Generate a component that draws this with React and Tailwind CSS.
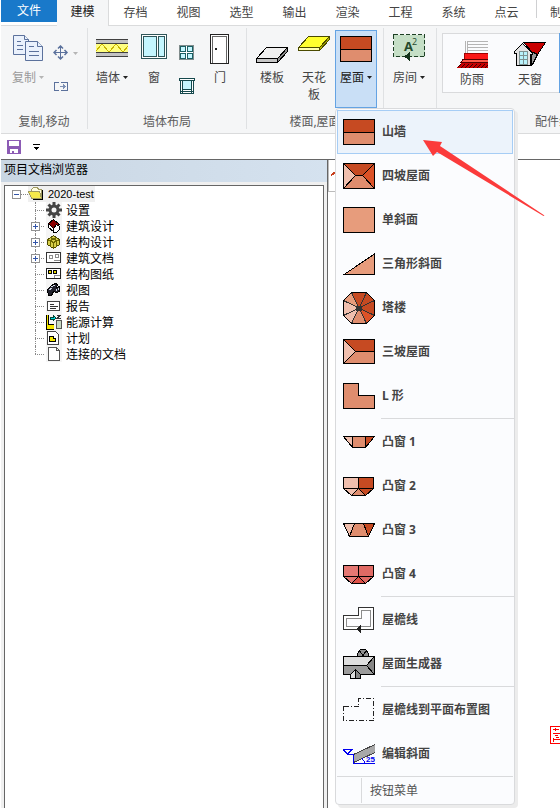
import { useState } from "react";

const Pic = ({ w = 32, h = 32, children, smooth = false }) => (
  <svg
    width={w}
    height={h}
    viewBox={`0 0 ${w} ${h}`}
    fill="none"
    stroke="#000"
    shapeRendering={smooth ? "auto" : "crispEdges"}
    className="block shrink-0"
    aria-hidden="true"
  >
    {children}
  </svg>
);

/* ---------- ribbon icons ---------- */

const CopyIcon = () => (
  <Pic smooth>
    <g stroke="#5b719c" fill="#eaf1fc">
      <path d="M1.5 1.5h11l4 4v15h-15z" />
      <path d="M12.5 1.5v4h4M5 7.5h4M5 11.5h6M5 15.5h6" />
      <path d="M13.5 7.5h12l5 5v14h-17z" />
      <path d="M25.5 7.5v5h5M17 12.5h5M17 17.5h10M17 21.5h10" />
    </g>
  </Pic>
);

const MoveIcon = () => (
  <Pic w={16} h={16} smooth>
    <path d="M7.5 1v13M1 7.5h13" stroke="#5b719c" />
    <path d="M5 3.5l2.500-2.500 2.500 2.500M5 11.5l2.500 2.500 2.500-2.500M3.500 5L1 7.500l2.500 2.500M11.500 5l2.500 2.500-2.500 2.500" stroke="#5b719c" strokeWidth="1.500" />
  </Pic>
);

const StretchIcon = () => (
  <Pic w={16} h={12}>
    <path d="M6 1.500H1.500v8H6M8 1.500h6.500v8H8" stroke="#5b719c" />
    <path d="M7 5.500h5M10 3.500l2 2-2 2" stroke="#7d90b4" />
  </Pic>
);

const WallIcon = () => (
  <Pic>
    <rect x="0" y="5" width="32" height="18" fill="#c3c3c3" stroke="none" />
    <rect x="0" y="9" width="32" height="10" fill="#ffff80" stroke="none" />
    <path d="M0 5.500h32M0 9.500h32M0 18.500h32M0 22.500h32" stroke="#404040" />
    <path d="M0 17l6-7 7 8 7-8 7 8 5-6" stroke="#c8b400" />
  </Pic>
);

const WindowIcon = () => (
  <Pic w={26}>
    <rect x="0.5" y="0.5" width="25" height="24" fill="#fff" stroke="#2f5559" />
    <rect x="2.500" y="2.500" width="13" height="20" fill="#c4f6ff" stroke="#2f5559" />
    <rect x="17.500" y="2.500" width="6" height="20" fill="#c4f6ff" stroke="#2f5559" />
  </Pic>
);

const GridWindowIcon = () => (
  <Pic w={16} h={16}>
    <rect x="0.5" y="0.5" width="14" height="14" fill="#fff" stroke="#808c8c" />
    <g fill="#c4f6ff" stroke="#1b5f63">
      <rect x="1.500" y="1.500" width="5" height="5" />
      <rect x="8.500" y="1.500" width="5" height="5" />
      <rect x="1.500" y="8.500" width="5" height="5" />
      <rect x="8.500" y="8.500" width="5" height="5" />
    </g>
  </Pic>
);

const ShopWindowIcon = () => (
  <Pic w={16} h={16}>
    <rect x="0.5" y="0.5" width="15" height="2" fill="#fff" stroke="#16494d" />
    <rect x="1.500" y="2.500" width="13" height="13" fill="#fff" stroke="#16494d" />
    <rect x="3.500" y="2.500" width="9" height="9" fill="#c4f6ff" stroke="#16494d" />
    <path d="M1 13.500h14M3.500 12v3M12.500 12v3" stroke="#16494d" />
  </Pic>
);

const DoorIcon = () => (
  <Pic w={20}>
    <rect x="0.5" y="0.5" width="18" height="29" fill="#fff" stroke="#222" />
    <path d="M2.500 29V2.500h14V29" stroke="#666" />
    <rect x="5" y="14" width="2" height="2" fill="#222" stroke="none" />
  </Pic>
);

const SlabIcon = () => (
  <Pic>
    <path d="M10.500 13.500h21l-10 11H0.500z" fill="#f0f0f0" />
    <path d="M0.500 24.500h21v4H0.500z" fill="#c6c6c6" />
    <path d="M31.500 13.500v4l-10 11v-4z" fill="#8c8c8c" />
  </Pic>
);

const CeilingIcon = () => (
  <Pic>
    <g stroke="#4a4a00">
      <path d="M10.500 2.500h21l-10 11H0.500z" fill="#ffff2e" />
      <path d="M0.500 13.500h21v3H0.500z" fill="#ffffb0" />
      <path d="M31.500 2.500v3l-10 11v-3z" fill="#b0b000" />
    </g>
  </Pic>
);

const RoofIcon = () => (
  <Pic>
    <rect x="0.5" y="2.500" width="31" height="13" fill="#c64a22" />
    <rect x="0.5" y="15.500" width="31" height="12" fill="#df8d6e" />
  </Pic>
);

const RoomIcon = () => (
  <Pic>
    <rect x="0.5" y="0.5" width="31" height="22" fill="#c5dfc6" stroke="#1d3f24" strokeDasharray="4 2" />
    <text x="11" y="17" fontSize="13" fontWeight="700" fontFamily="Open Sans, sans-serif" fill="#264b2d" stroke="none">A</text>
    <text x="19" y="11" fontSize="9" fontFamily="Open Sans, sans-serif" fill="#264b2d" stroke="none">2</text>
    <path d="M17 18v9l-6-4.500z" fill="#12331a" stroke="none" />
  </Pic>
);

const FlashingIcon = () => (
  <Pic h={28}>
    <path d="M9.500 1v12M11.500 1v12" stroke="#b4b4b4" />
    <path d="M12 1.500h20M12 4.500h20M12 7.500h20M12 10.500h20" stroke="#b4b4b4" />
    <rect x="8.500" y="13.500" width="24" height="6" fill="#fb1717" stroke="#a00000" />
    <path d="M7 19.500h25v3H5z" fill="#ff5a4a" stroke="#500" />
    <path d="M5 23h27v5H0z" fill="#c80000" stroke="none" />
    <path d="M2 27l3-3M5 28l4-4M9 28l4-4M13 28l4-4M17 28l4-4M21 28l4-4M25 28l4-4M29 28l3-3" stroke="#3a0000" />
  </Pic>
);

const DormerIcon = () => (
  <Pic h={28}>
    <path d="M9.500 2.500h22l-8 12-5-2z" fill="#c90000" />
    <path d="M17.500 14.500l2-2 4 2-5 10-1 1z" fill="#9a9a9a" />
    <path d="M2.500 25.500v-12H0.500v-2l8-8 10 10v1h-2v11z" fill="#e4e4e4" />
    <rect x="5" y="11" width="8" height="13" fill="#b8f2fb" stroke="#7e9292" />
    <path d="M9 11v13M5 15.500h8M5 19.500h8" stroke="#7e9292" />
  </Pic>
);

const SaveIcon = () => (
  <Pic w={14} h={14}>
    <path d="M0 0h14v14H0z" fill="#8c5bb5" stroke="none" />
    <path d="M2 1h10v5H2zM3 9h8v4H3z" fill="#fff" stroke="none" />
    <path d="M5 11h2v2H5z" fill="#8c5bb5" stroke="none" />
  </Pic>
);

const Caret = ({ muted = false }) => (
  <svg width="5" height="3" viewBox="0 0 5 3" className="block shrink-0" aria-hidden="true">
    <path d="M0 0h5L2.500 3z" fill={muted ? "#b5b5b5" : "#222"} />
  </svg>
);

/* ---------- roof menu icons ---------- */

const DARK = "#c64a22";
const MID = "#df8d6e";
const PALE = "#f0bfae";
const HOT = "#dc5227";

const GableIcon = () => (
  <Pic h={26}>
    <rect x="0.5" y="0.5" width="31" height="13" fill={DARK} />
    <rect x="0.5" y="13.500" width="31" height="12" fill={MID} />
  </Pic>
);

const HipIcon = () => (
  <Pic h={26}>
    <path d="M0.500 0.500l12 12h7l12-12z" fill={DARK} />
    <path d="M31.500 0.500l-12 12 12 13z" fill={HOT} />
    <path d="M0.500 0.500l12 12-12 13z" fill={PALE} />
    <path d="M0.500 25.500l12-13h7l12 13z" fill={MID} />
    <rect x="0.5" y="0.5" width="31" height="25" />
  </Pic>
);

const ShedIcon = () => (
  <Pic h={26}>
    <rect x="0.5" y="0.5" width="31" height="25" fill="#e79c7c" />
  </Pic>
);

const TriangleIcon = () => (
  <Pic h={22}>
    <path d="M1 21.500L31.500 1v20.500z" fill="#e79c7c" />
  </Pic>
);

const TowerIcon = () => (
  <Pic>
    <g stroke="#333">
      <path d="M16 16L8.500 0.500h15z" fill={DARK} />
      <path d="M16 16l7.500-15.500 8 8z" fill={DARK} />
      <path d="M16 16l15.500-7.500v15z" fill={DARK} />
      <path d="M16 16l15.500 7.500-8 8z" fill={HOT} />
      <path d="M16 16l7.500 15.500h-15z" fill={MID} />
      <path d="M16 16L8.500 31.500l-8-8z" fill={PALE} />
      <path d="M16 16L0.500 23.500v-15z" fill={PALE} />
      <path d="M16 16L0.500 8.500l8-8z" fill="#e79c7c" />
    </g>
    <path d="M8.500 0.500h15l8 8v15l-8 8h-15l-8-8v-15z" />
    <rect x="13" y="14" width="6" height="5" fill="#333" stroke="none" />
  </Pic>
);

const ThreeHipIcon = () => (
  <Pic h={26}>
    <path d="M0.500 0.500h31v12h-19z" fill={DARK} />
    <path d="M0.500 24.500h31v-12h-19z" fill={MID} />
    <path d="M0.500 0.500l12 12-12 12z" fill={PALE} />
  </Pic>
);

const LShapeIcon = () => (
  <Pic h={26}>
    <path d="M0.500 0.500h15v12h16v13h-31z" fill={MID} />
  </Pic>
);

const Bay1Icon = () => (
  <Pic h={12}>
    <path d="M0.500 0.500h9v11z" fill={PALE} />
    <path d="M9.500 0.500h13v11h-13z" fill={MID} />
    <path d="M22.500 0.500h9l-9 11z" fill={DARK} />
  </Pic>
);

const Bay2Icon = () => (
  <Pic h={19}>
    <path d="M0.500 0.500h15v11h-15z" fill={PALE} />
    <path d="M15.500 0.500h15v11h-15z" fill={DARK} />
    <path d="M0.500 11.500h15l-7 7z" fill={PALE} />
    <path d="M15.500 11.500l-7 7h14z" fill={MID} />
    <path d="M15.500 11.500h15l-8 7z" fill={DARK} />
  </Pic>
);

const Bay3Icon = () => (
  <Pic h={14}>
    <path d="M0.500 0.500h11l-5 13z" fill={PALE} />
    <path d="M11.500 0.500h9l5 13h-19z" fill={MID} />
    <path d="M20.500 0.500h11l-6 13z" fill={DARK} />
  </Pic>
);

const Bay4Icon = () => (
  <Pic h={19}>
    <path d="M0.500 0.500h15v11h-15z" fill="#e57873" />
    <path d="M15.500 0.500h15v11h-15z" fill="#e06a64" />
    <path d="M0.500 11.500h15l-7 7z" fill="#e57873" />
    <path d="M15.500 11.500l-7 7h14z" fill="#df5148" />
    <path d="M15.500 11.500h15l-8 7z" fill="#e06a64" />
  </Pic>
);

const EavesIcon = () => (
  <Pic h={26}>
    <path d="M0.500 8.500h15v-8h15v22h-30z" fill="#fff" stroke="#333" />
    <path d="M3.500 11.500h15v-8h9v16h-24z" fill="#fdfdff" stroke="#8c8c8c" />
    <path d="M18 18v8l-5-4z" fill="#222" stroke="none" />
  </Pic>
);

const RoofGenIcon = () => (
  <Pic h={30}>
    <path d="M14.500 8V4.500l3-4h5l3 4V8z" fill="#8e8e8e" />
    <path d="M17 2l3 5 3-5" />
    <path d="M0.500 7.500h31l-8 9h-23z" fill="#dedede" />
    <path d="M0.500 16.500h23l8 9h-31z" fill="#9b9b9b" />
    <path d="M31.500 7.500l-8 9 8 9z" fill="#868686" />
    <path d="M7.500 29.500v-4l5-5v9z" fill="#dedede" />
    <path d="M12.500 20.500l5 5v4h-5z" fill="#868686" />
  </Pic>
);

const EavesPlanIcon = () => (
  <Pic h={24}>
    <path d="M0.500 8.500h15v-8h15v22h-30z" stroke="#222" strokeDasharray="5 2 1 2" />
  </Pic>
);

const EditSlopeIcon = () => (
  <Pic h={20}>
    <path d="M10.500 10.500L32 0.500v8L10.500 18.500z" fill="#a8a8a8" stroke="#444" />
    <path d="M0 5.500h9L4.500 10zM4 10.500h7M10.500 11v8M10 19.500h22M19 14l3 5" stroke="#0000f0" />
    <text x="23" y="18" fontSize="8" fontWeight="700" fontFamily="Liberation Sans, sans-serif" fill="#0000f0" stroke="none">25</text>
  </Pic>
);

/* ---------- project tree icons ---------- */

const FolderIcon = () => (
  <Pic w={16} h={16}>
    <path d="M3.500 6V3.500l2-2h4l1 2h3V12" fill="#fffde0" stroke="#a09a60" />
    <path d="M0.500 5.500h11l2 7h-10z" fill="#f6ea4a" stroke="#a09a60" />
    <path d="M5 13.500h9.500V4" />
  </Pic>
);

const GearIcon = () => (
  <Pic w={16} h={16} smooth>
    <circle cx="8" cy="8" r="4" stroke="#444" strokeWidth="3" />
    <path d="M8 0v3M8 13v3M0 8h3M13 8h3M2.500 2.500l2 2M11.500 11.500l2 2M13.500 2.500l-2 2M4.500 11.500l-2 2" stroke="#444" strokeWidth="3" />
  </Pic>
);

const HouseIcon = () => (
  <Pic w={16} h={16}>
    <path d="M2.500 5.500l5-4 6 5-3 1-3 4z" fill="#8b0000" />
    <path d="M2.500 5.500v4l5 4v-3z" fill="#fff" />
    <path d="M7.500 14.500v-4l3-4 3 2v3l-3 3z" fill="#fff" />
  </Pic>
);

const FrameIcon = () => (
  <Pic w={16} h={16}>
    <path d="M1.500 5.500l6-4 6 4v5l-6 4-6-4z" fill="#d8cf4a" stroke="#4c4800" />
    <path d="M1.500 5.500l6 3 6-3M7.500 8v7M4.500 7v6M10.500 7v6M4.500 3.500l6 3M10.500 3.500l-6 3" stroke="#6c6600" />
  </Pic>
);

const DrawingIcon = () => (
  <Pic w={16} h={16}>
    <rect x="0.5" y="2.500" width="14" height="10" fill="#fff" stroke="#333" />
    <path d="M3.500 5.500h3v3h-3zM9.500 4.500h3v3h-3zM8 10.500h6" stroke="#8c8c8c" />
  </Pic>
);

const SheetIcon = () => (
  <Pic w={16} h={16}>
    <rect x="0.5" y="2.500" width="14" height="10" fill="#fff" stroke="#222" />
    <path d="M2.500 4.500h3v3h-3zM7.500 4.500h3v3h-3z" fill="#e8d800" stroke="#000" />
    <path d="M8.500 12v-2.500h5.500" stroke="#8c8c8c" />
  </Pic>
);

const CameraIcon = () => (
  <Pic w={16} h={16}>
    <path d="M1.500 7.500l4-4 4-2 2 1-1 3 3-1v5l-3 1-3-1-2 4h-3z" fill="#20202c" />
    <path d="M5 5l4-2M3 8l3-2M10 7v2M12 6v2" stroke="#d0d6e4" />
  </Pic>
);

const ReportIcon = () => (
  <Pic w={16} h={16}>
    <rect x="1.500" y="3.500" width="12" height="9" fill="#fff" stroke="#444" />
    <path d="M4 6.500h4M4 8.500h8M4 10.500h6" stroke="#333" />
  </Pic>
);

const EnergyIcon = () => (
  <Pic w={16} h={16}>
    <path d="M0 1h3v14H0zM0 11h8v4H0z" fill="#f4e600" stroke="none" />
    <path d="M0.500 1v14M2.500 1v9.500H8M0 15.500h8" />
    <path d="M4 3h3V1l3 3-3 3V5H4z" fill="#00d8e0" stroke="#043" />
    <path d="M11 1.500h3l-3 3h4" stroke="#333" />
    <rect x="10.500" y="6.500" width="5" height="8" fill="#c6d8c2" stroke="#555" />
  </Pic>
);

const PlanIcon = () => (
  <Pic w={16} h={16}>
    <path d="M1.500 1.500h8l3 3v10h-11z" fill="#fff" stroke="#444" />
    <path d="M3.500 6.500h4v2h2v3h-6z" fill="#f4e600" />
  </Pic>
);

const PageIcon = () => (
  <Pic w={16} h={16}>
    <path d="M2.500 1.500h8l3 3v10h-11zM10.500 1.500v3h3" fill="#fff" stroke="#555" />
  </Pic>
);

const tabs = ["存档", "视图", "选型", "输出", "渲染", "工程", "系统", "点云"];

const roofMenu = [
  [
    { label: "山墙", Icon: GableIcon },
    { label: "四坡屋面", Icon: HipIcon },
    { label: "单斜面", Icon: ShedIcon },
    { label: "三角形斜面", Icon: TriangleIcon },
    { label: "塔楼", Icon: TowerIcon },
    { label: "三坡屋面", Icon: ThreeHipIcon },
    { label: "L 形", Icon: LShapeIcon },
  ],
  [
    { label: "凸窗 1", Icon: Bay1Icon },
    { label: "凸窗 2", Icon: Bay2Icon },
    { label: "凸窗 3", Icon: Bay3Icon },
    { label: "凸窗 4", Icon: Bay4Icon },
  ],
  [
    { label: "屋檐线", Icon: EavesIcon },
    { label: "屋面生成器", Icon: RoofGenIcon },
  ],
  [
    { label: "屋檐线到平面布置图", Icon: EavesPlanIcon },
    { label: "编辑斜面", Icon: EditSlopeIcon },
  ],
];

const treeItems = [
  { label: "设置", Icon: GearIcon },
  { label: "建筑设计", Icon: HouseIcon, children: true },
  { label: "结构设计", Icon: FrameIcon, children: true },
  { label: "建筑文档", Icon: DrawingIcon, children: true },
  { label: "结构图纸", Icon: SheetIcon },
  { label: "视图", Icon: CameraIcon },
  { label: "报告", Icon: ReportIcon },
  { label: "能源计算", Icon: EnergyIcon },
  { label: "计划", Icon: PlanIcon },
  { label: "连接的文档", Icon: PageIcon },
];

const Group = ({ title, className = "", children }) => (
  <section className={`flex shrink-0 flex-col pt-1 ${className}`}>
    <div className="flex h-[78px] items-start">{children}</div>
    <h2 className="mt-1.5 text-center whitespace-nowrap text-[#5c5c5c]">{title}</h2>
  </section>
);

const Divider = () => <div className="mt-0.5 mb-1 w-px shrink-0 bg-[#dfe1e3]" />;

const Tool = ({ label, icon, caret = false, muted = false, className = "", ...rest }) => (
  <button type="button" className={`flex shrink-0 flex-col items-center pt-1 ${muted ? "text-[#9a9a9a]" : ""} ${className}`} {...rest}>
    {icon}
    <span className="mt-[3px] flex items-center gap-[3px] leading-[17px]">
      {label}
      {caret && <Caret muted={muted} />}
    </span>
  </button>
);

const Expander = ({ label, open = false }) => (
  <button type="button" aria-label={label} aria-expanded={open} className="block size-[9px] shrink-0">
    <Pic w={9} h={9}>
      <rect x="0.5" y="0.5" width="8" height="8" fill="#fff" stroke="#919191" />
      <path d={open ? "M2 4.500h5" : "M2 4.500h5M4.500 2v5"} stroke="#3355a8" />
    </Pic>
  </button>
);

const RoofMenu = ({ active, onSelect }) => (
  <div
    role="menu"
    className="absolute top-full left-0 z-10 w-[180px] rounded-sm border border-[#d9dadc] bg-[#fbfcfe] shadow-[3px_3px_0_#ececec]"
  >
    <div className="pt-px">
      {roofMenu.map((section, idx) => (
        <div key={idx}>
          {section.map(({ label, Icon }) => (
            <button
              key={label}
              type="button"
              role="menuitem"
              onClick={() => onSelect(label)}
              className={`mx-px flex h-11 w-[176px] items-center gap-[7px] border pl-[5px] font-bold text-[#444] ${
                active === label ? "border-[#a6cdf5] bg-[#ecf3fb]" : "border-transparent"
              }`}
            >
              <Icon />
              <span className="whitespace-nowrap">{label}</span>
            </button>
          ))}
          {idx < roofMenu.length - 1 && <div className="mb-px ml-[45px] h-px bg-[#d9dadc]" />}
        </div>
      ))}
    </div>
    <div className="mx-px flex h-7 border-t border-[#d9dadc] text-[#555]">
      <div className="my-px w-[25px] border-r border-[#d9dadc]" />
      <button type="button" className="pl-2">按钮菜单</button>
    </div>
  </div>
);

export default function App() {
  const [roofOpen, setRoofOpen] = useState(true);
  const [active, setActive] = useState("山墙");

  return (
    <div className="relative flex min-h-screen flex-col overflow-hidden bg-white pl-px font-['Noto_Sans','Noto_Sans_CJK_SC',sans-serif] text-xs text-[#444]">
      <header className="relative bg-[#f5f6f7]">
        <nav className="flex h-[26px] border-b border-[#dadbdc] bg-white">
          <button type="button" className="h-[22px] w-14 shrink-0 bg-[#1979ca] text-white">文件</button>
          <button type="button" className="-mb-px h-[26px] w-[52px] shrink-0 border-r border-[#dadbdc] bg-[#f5f6f7] pb-0.5 text-[#222]">
            建模
          </button>
          {tabs.map((tab) => (
            <button key={tab} type="button" className="h-[25px] w-[53px] shrink-0">
              {tab}
            </button>
          ))}
          <div className="ml-[3px] h-[18px] w-px shrink-0 bg-[#cfd0d2]" />
          <button type="button" className="h-[25px] shrink-0 pl-[13px] whitespace-nowrap">制</button>
        </nav>

        <div className="flex h-[108px] border-b border-[#dadbdc]">
          <Group title="复制,移动" className="w-[86px]">
            <Tool label="复制" icon={<CopyIcon />} caret muted className="ml-[5px] w-[44px]" />
            <div className="flex flex-col gap-5 pt-[15px] pl-[3px]">
              <button type="button" aria-label="移动" className="flex items-center gap-1">
                <MoveIcon />
                <Caret muted />
              </button>
              <button type="button" aria-label="拉伸"><StretchIcon /></button>
            </div>
          </Group>
          <Divider />
          <Group title="墙体布局" className="w-[158px]">
            <Tool label="墙体" icon={<WallIcon />} caret className="ml-[3px] w-[42px]" />
            <Tool label="窗" icon={<WindowIcon />} className="w-[42px]" />
            <div className="flex w-6 flex-col items-center gap-[17px] pt-[15px]">
              <button type="button" aria-label="格窗"><GridWindowIcon /></button>
              <button type="button" aria-label="橱窗"><ShopWindowIcon /></button>
            </div>
            <Tool label="门" icon={<DoorIcon />} className="w-[42px]" />
          </Group>
          <Divider />
          <Group title="楼面,屋面" className="w-[136px]">
            <Tool label="楼板" icon={<SlabIcon />} className="ml-1 w-[42px]" />
            <Tool label={<>天花<br />板</>} icon={<CeilingIcon />} className="w-[42px] text-center" />
            <div className="relative">
              <Tool
                label="屋面"
                icon={<RoofIcon />}
                caret
                onClick={() => setRoofOpen(!roofOpen)}
                aria-haspopup="menu"
                aria-expanded={roofOpen}
                className="h-[78px] w-[42px] border border-[#64a3e3] bg-[#c9dff6] pt-[3px]! text-[#222]"
              />
              {roofOpen && <RoofMenu active={active} onSelect={setActive} />}
            </div>
          </Group>
          <Divider />
          <Group title="" className="w-[52px]">
            <Tool label="房间" icon={<RoomIcon />} caret className="ml-1 w-[42px]" />
          </Group>
          <Divider />
          <Group title="配件组" className="w-[232px] px-[5px]">
            <div className="mt-[3px] flex h-[60px] border border-[#d9dadc] bg-[#fafbfd]">
              <Tool label="防雨" icon={<FlashingIcon />} className="w-[58px] pt-1.5!" />
              <Tool label="天窗" icon={<DormerIcon />} className="w-[58px] pt-1.5!" />
              <div className="-my-px w-4 border border-[#64a3e3] bg-[#c9dff6]" />
            </div>
          </Group>
        </div>
      </header>

      <div className="flex h-[26px] items-center gap-3 border-b border-[#666] pl-1.5">
        <button type="button" aria-label="保存"><SaveIcon /></button>
        <button type="button" aria-label="自定义工具栏">
          <Pic w={7} h={6}>
            <path d="M0 0.500h7" />
            <path d="M0 3h7L3.500 6z" fill="#000" stroke="none" />
          </Pic>
        </button>
      </div>

      <div className="flex flex-1">
        <aside className="flex w-[327px] shrink-0 flex-col border-r border-[#666] bg-[#f0f0f0] text-black">
          <h1 className="h-[22px] bg-linear-to-r from-[#c9d6e3] to-[#d5e2ef] pl-[3px] leading-5">项目文档浏览器</h1>
          <div className="mx-[3px] mt-[3px] flex-1 border border-b-0 border-[#666] bg-white pl-[7px]">
            <div className="flex h-4 items-center">
              <Expander label="2020-test" open />
              <div className="w-[7px] border-t border-dotted border-[#888]" />
              <div className="flex h-4 items-center gap-1 bg-[#f0f0f0] pr-px font-['Liberation_Sans',sans-serif] text-[11px]">
                <FolderIcon />
                2020-test
              </div>
            </div>
            <ul className="pl-[18px]">
              {treeItems.map(({ label, Icon, children }, idx) => (
                <li key={label} className="flex h-4 items-center">
                  <div className="relative flex h-4 w-4 items-center pl-px">
                    <div
                      className={`absolute top-0 left-[5px] border-l border-dotted border-[#888] ${
                        idx === treeItems.length - 1 ? "h-2" : "h-4"
                      }`}
                    />
                    <div className="absolute top-2 right-0.5 left-[5px] border-t border-dotted border-[#888]" />
                    {children && <div className="relative"><Expander label={label} /></div>}
                  </div>
                  <div className="flex h-4 items-center gap-1">
                    <div className="bg-[#f5f5f5]"><Icon /></div>
                    <span className="pt-px whitespace-nowrap">{label}</span>
                  </div>
                </li>
              ))}
            </ul>
          </div>
        </aside>

        <main className="relative flex-1">
          <div className="h-8 w-8 border border-t-0 border-[#bbb]">
            <Pic w={30} h={30}>
              <path d="M2 15l5-3" stroke="#c8401e" strokeWidth="2" />
              <path d="M6.500 14v12" stroke="#999" />
            </Pic>
          </div>
          <div className="absolute right-0 bottom-16">
            <Pic w={10} h={18}>
              <path d="M10 0.500H0.500v17H10" stroke="#f00" />
              <path d="M3 3.500h6M5.500 2v3M3 7.500h7M5 9.500h3M3 13.500h7M3.500 12v4M6 11.500h3" stroke="#f00" />
            </Pic>
          </div>
        </main>
      </div>

      <svg
        width="124"
        height="80"
        viewBox="0 0 124 80"
        className="pointer-events-none absolute top-[138px] left-[422px] z-20"
        aria-hidden="true"
      >
        <path d="M1 2l19 2-2 4 104.500 69.500-1 0.500L15 14l-4 4z" fill="#fb3b3b" />
      </svg>
    </div>
  );
}
